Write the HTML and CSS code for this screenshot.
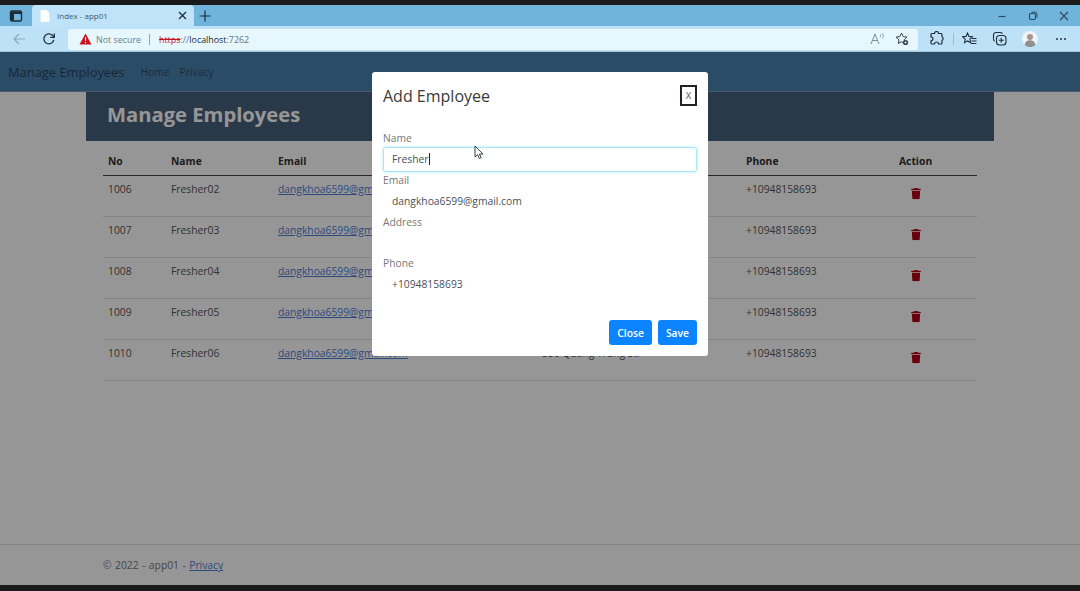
FILE: index.html
```html
<!DOCTYPE html>
<html lang="en">
<head>
<meta charset="UTF-8">
<meta name="viewport" content="width=device-width, initial-scale=1.0">
<title>Index - app01</title>
<link rel="stylesheet" href="styles.css">
</head>
<body>

<div class="tabstrip">
  <div class="tab-actions">
    <svg width="14" height="14" viewBox="0 0 14 14"><rect x="1.5" y="2" width="11" height="10" rx="1.5" fill="none" stroke="#1c2b3a" stroke-width="1.4"/><rect x="2" y="2.5" width="10" height="2.5" fill="#1c2b3a"/><rect x="2" y="5" width="3" height="6.5" fill="#1c2b3a"/></svg>
  </div>
  <div class="tab">
    <svg width="12" height="14" viewBox="0 0 12 14"><path d="M1.5 1h6l3 3v9h-9z" fill="#fff" stroke="#dfeaf2" stroke-width=".6"/></svg>
    <span class="tab-title">Index - app01</span>
    <svg class="tab-close" width="9" height="9" viewBox="0 0 9 9"><path d="M1 1l7 7M8 1L1 8" stroke="#22303c" stroke-width="1.3"/></svg>
  </div>
  <svg class="tab-new" width="12" height="12" viewBox="0 0 12 12"><path d="M6 .5v11M.5 6h11" stroke="#1c2b3a" stroke-width="1.2"/></svg>
  <div class="window-btns">
    <svg width="10" height="10" viewBox="0 0 10 10"><path d="M1.5 5.500h7" stroke="#2c4a60" stroke-width="1.2"/></svg>
    <svg width="10" height="10" viewBox="0 0 10 10"><rect x="1.500" y="2.500" width="6" height="6" rx="1.2" fill="none" stroke="#2c4a60" stroke-width="1.1"/><path d="M3.500 1.200h4a1.400 1.400 0 0 1 1.400 1.400v4" fill="none" stroke="#2c4a60" stroke-width="1"/></svg>
    <svg width="10" height="10" viewBox="0 0 10 10"><path d="M1 1l8 8M9 1L1 9" stroke="#2c4a60" stroke-width="1.1"/></svg>
  </div>
</div>

<div class="toolbar">
  <svg class="nav-back" width="14" height="14" viewBox="0 0 14 14"><path d="M13 7H2M7 2L2 7l5 5" fill="none" stroke="#8fa9bb" stroke-width="1.2"/></svg>
  <svg class="nav-reload" width="14" height="14" viewBox="0 0 14 14"><path d="M11.800 7.800A5 5 0 1 1 10.400 3.300L12 5" fill="none" stroke="#22303c" stroke-width="1.3"/><path d="M12.300 1.400v4h-4" fill="none" stroke="#22303c" stroke-width="1.3"/></svg>
  <div class="addressbar">
    <svg width="13" height="12" viewBox="0 0 13 12"><path d="M6.500.5l6 11H.5z" fill="#c8141c"/><path d="M6.500 4v4M6.500 9v1.200" stroke="#fff" stroke-width="1.1"/></svg>
    <span class="not-secure">Not secure</span>
    <span class="addr-sep"></span>
    <span class="url"><s class="url-https">https</s><span class="url-dim">://</span>localhost<span class="url-dim">:7262</span></span>
    <svg class="addr-read" width="16" height="14" viewBox="0 0 16 14"><path d="M1 12L5 2l4 10M2.500 8.500h5" fill="none" stroke="#7d8d99" stroke-width="1"/><path d="M10 2c1 .8 1 2.400 0 3.200M12 1c1.800 1.400 1.800 4 0 5.400" fill="none" stroke="#7d8d99" stroke-width=".8"/></svg>
    <svg class="addr-fav" width="14" height="14" viewBox="0 0 14 14"><path d="M6.500 1l1.700 3.600 3.800.5-2.800 2.700.7 3.800-3.400-1.900-3.200 1.800.7-3.700L1 5.100l3.800-.5z" fill="none" stroke="#33444f" stroke-width="1"/><circle cx="10.500" cy="10.500" r="2.600" fill="#33444f"/><circle cx="10.500" cy="10.500" r="1" fill="#e6f7fe"/></svg>
  </div>
  <div class="toolbar-icons">
    <svg width="15" height="15" viewBox="0 0 15 15"><path d="M5.500 2.500a2 2 0 0 1 4 0h2.500a1 1 0 0 1 1 1v2.200a2 2 0 0 1 0 3.600V12a1 1 0 0 1-1 1H9.500a2 2 0 0 0-4 0H3a1 1 0 0 1-1-1V9.800a2 2 0 0 0 0-4V3.500a1 1 0 0 1 1-1z" fill="none" stroke="#22303c" stroke-width="1.2"/></svg>
    <span class="tool-sep"></span>
    <svg width="15" height="14" viewBox="0 0 15 14"><path d="M5.500 1l1.500 3.400 3.400.4-2.500 2.400.7 3.500-3.100-1.800-3 1.800.7-3.500L.7 4.800l3.400-.4z" fill="none" stroke="#22303c" stroke-width="1.1"/><path d="M10 6.500h4.500M9.500 9h5M9 11.500h5.500" stroke="#22303c" stroke-width="1"/></svg>
    <svg width="15" height="15" viewBox="0 0 15 15"><path d="M2.500 10.500a4.600 4.600 0 0 1-1-3V4a2.500 2.500 0 0 1 2.500-2.500h4a4 4 0 0 1 2.600 1" fill="none" stroke="#22303c" stroke-width="1.1"/><rect x="4.500" y="4.500" width="9.500" height="9.500" rx="3" fill="none" stroke="#22303c" stroke-width="1.1"/><path d="M9.200 6.800v5M6.800 9.200h5" stroke="#22303c" stroke-width="1.1"/></svg>
    <svg width="16" height="16" viewBox="0 0 16 16"><circle cx="8" cy="8" r="8" fill="#eef3f6"/><circle cx="8" cy="6" r="3" fill="#a8938c"/><path d="M2.600 14c.5-3.400 2.600-4.800 5.400-4.800s4.900 1.400 5.400 4.800A8 8 0 0 1 2.600 14z" fill="#8f8f8f"/></svg>
    <svg class="tool-more" width="12" height="4" viewBox="0 0 12 4"><circle cx="2" cy="2" r="1" fill="#22303c"/><circle cx="6" cy="2" r="1" fill="#22303c"/><circle cx="10" cy="2" r="1" fill="#22303c"/></svg>
  </div>
</div>

<div class="viewport">
  <nav class="navbar">
    <span class="brand">Manage Employees</span>
    <a class="nav-link">Home</a>
    <a class="nav-link">Privacy</a>
  </nav>

  <main class="content">
    <div class="page-title">Manage Employees</div>
    <table class="emp-table">
      <colgroup>
        <col class="col-no"><col class="col-name"><col class="col-email"><col class="col-address"><col class="col-phone"><col class="col-action">
      </colgroup>
      <thead>
        <tr><th>No</th><th>Name</th><th>Email</th><th>Address</th><th>Phone</th><th>Action</th></tr>
      </thead>
      <tbody>
        <tr><td>1006</td><td>Fresher02</td><td><a class="link">dangkhoa6599@gmail.com</a></td><td>556 Quang Trung St.</td><td>+10948158693</td><td><svg class="trash" viewBox="0 0 12 14"><use href="#trash-icon"/></svg></td></tr>
        <tr><td>1007</td><td>Fresher03</td><td><a class="link">dangkhoa6599@gmail.com</a></td><td>556 Quang Trung St.</td><td>+10948158693</td><td><svg class="trash" viewBox="0 0 12 14"><use href="#trash-icon"/></svg></td></tr>
        <tr><td>1008</td><td>Fresher04</td><td><a class="link">dangkhoa6599@gmail.com</a></td><td>556 Quang Trung St.</td><td>+10948158693</td><td><svg class="trash" viewBox="0 0 12 14"><use href="#trash-icon"/></svg></td></tr>
        <tr><td>1009</td><td>Fresher05</td><td><a class="link">dangkhoa6599@gmail.com</a></td><td>556 Quang Trung St.</td><td>+10948158693</td><td><svg class="trash" viewBox="0 0 12 14"><use href="#trash-icon"/></svg></td></tr>
        <tr><td>1010</td><td>Fresher06</td><td><a class="link">dangkhoa6599@gmail.com</a></td><td>556 Quang Trung St.</td><td>+10948158693</td><td><svg class="trash" viewBox="0 0 12 14"><use href="#trash-icon"/></svg></td></tr>
      </tbody>
    </table>
  </main>

  <footer class="footer">&copy; 2022 - app01 - <a class="link">Privacy</a></footer>

  <div class="backdrop">
    <div class="modal">
      <div class="modal-header">
        <h2 class="modal-title">Add Employee</h2>
        <button class="modal-x" type="button">X</button>
      </div>
      <form class="modal-body">
        <label class="field-label">Name</label>
        <div class="field-value field-focus">Fresher<span class="caret"></span></div>
        <label class="field-label">Email</label>
        <div class="field-value">dangkhoa6599@gmail.com</div>
        <label class="field-label">Address</label>
        <div class="field-value"></div>
        <label class="field-label">Phone</label>
        <div class="field-value">+10948158693</div>
      </form>
      <div class="modal-footer">
        <button class="btn" type="button">Close</button>
        <button class="btn" type="button">Save</button>
      </div>
    </div>
    <svg class="mouse" width="10" height="15" viewBox="0 0 10 15"><path d="M1 1v11l2.600-2.300L5.300 13.500l1.800-.8-1.700-3.600H9z" fill="#fff" stroke="#33404a" stroke-width="1"/></svg>
  </div>
</div>

<div class="bottom-bar"></div>

<svg class="icon-defs" width="0" height="0">
  <symbol id="trash-icon" viewBox="0 0 12 14">
    <path d="M4 1.200V.5h4v.7h3.200c.4 0 .6.3.6.7v1H.2v-1c0-.4.2-.7.6-.7z" fill="#b30014"/>
    <path d="M1 3.800h10l-.6 9.200c0 .6-.4 1-1 1H2.600c-.6 0-1-.4-1-1z" fill="#b30014"/>
  </symbol>
</svg>

</body>
</html>
```

FILE: styles.css
```css
* {
  box-sizing: border-box;
}

html, body {
  height: 100%;
}

body {
  margin: 0;
  height: 591px;
  overflow: hidden;
  display: flex;
  flex-direction: column;
  font-family: "Open Sans", "Noto Sans", sans-serif;
  font-size: 10.3px;
  color: #212529;
  background-color: #1a1a1a;
  padding-top: 5px;
}

/* browser chrome */
.tabstrip {
  height: 21px;
  display: flex;
  align-items: center;
  background-color: #70b4dc;
  flex-shrink: 0;
}

.tab-actions {
  width: 32px;
  display: flex;
  justify-content: center;
}

.tab {
  width: 162px;
  height: 21px;
  display: flex;
  align-items: center;
  gap: 6px;
  padding: 0 7px;
  background-color: #bfe3f8;
  border-radius: 4px 4px 0 0;
}

.tab-title {
  flex: 1;
  font-size: 8px;
  color: #44576a;
}

.tab-new {
  margin-left: 5px;
}

.window-btns {
  margin-left: auto;
  display: flex;
  gap: 21px;
  padding-right: 11px;
}

.toolbar {
  height: 26px;
  display: flex;
  align-items: center;
  background-color: #bde1f7;
  border-bottom: 1px solid #a5c8dc;
  flex-shrink: 0;
}

.nav-back {
  margin-left: 12px;
}

.nav-reload {
  margin-left: 16px;
}

.addressbar {
  width: 850px;
  height: 21px;
  flex-shrink: 0;
  margin: 1px 0 0 12px;
  padding: 0 9px 0 11px;
  display: flex;
  align-items: center;
  background-color: #e6f7fe;
  border-radius: 3px;
}

.not-secure {
  margin-left: 4px;
  font-size: 8.9px;
  color: #6f7f8a;
}

.addr-sep {
  width: 1px;
  height: 11px;
  margin: 0 9px 0 8px;
  background-color: #8fa3b0;
}

.url {
  font-size: 8.9px;
  color: #1e2a33;
}

.url-https {
  color: #c8141c;
}

.url-dim {
  color: #66737c;
}

.addr-read {
  margin-left: auto;
}

.addr-fav {
  margin-left: 9px;
}

.toolbar-icons {
  flex: 1;
  display: flex;
  align-items: center;
  padding-left: 11px;
  gap: 15px;
}

.tool-sep {
  width: 1px;
  height: 12px;
  margin: 0 -6.5px;
  background-color: #9dbccd;
}

.tool-more {
  margin-left: 2px;
}

/* page */
.viewport {
  flex: 1;
  position: relative;
  display: flex;
  flex-direction: column;
  background-color: #fff;
  min-height: 0;
}

.navbar {
  height: 40px;
  flex-shrink: 0;
  display: flex;
  align-items: center;
  padding-left: 8px;
  background-color: #4a82b0;
  border-bottom: 1px solid #7b9cba;
}

.brand {
  font-size: 12.9px;
  color: #1b2f3f;
  margin-right: 16px;
  opacity: .75;
}

.nav-link {
  color: #2b4a63;
  margin-right: 10px;
}

.content {
  flex: 1;
  width: 908px;
  margin: 0 auto 0 86px;
}

.page-title {
  height: 49px;
  padding: 0 0 5px 21px;
  display: flex;
  align-items: center;
  font-size: 20.2px;
  font-weight: 700;
  color: #fff;
  background-color: #48617c;
}

.emp-table {
  width: 874px;
  margin: 0 0 0 17px;
  border-collapse: collapse;
  table-layout: fixed;
}

.col-no { width: 63px; }
.col-name { width: 107px; }
.col-email { width: 264px; }
.col-address { width: 204px; }
.col-phone { width: 153px; }
.col-action { width: 83px; }

.emp-table th {
  height: 34px;
  padding: 7px 5px 0;
  text-align: left;
  font-weight: 700;
  color: #333;
  border-bottom: 1px solid #444;
}

.emp-table td {
  height: 41px;
  padding: 6px 5px 5px;
  vertical-align: top;
  color: #555;
  border-bottom: 1px solid #dee2e6;
  white-space: nowrap;
}

.emp-table td .link,
.footer .link {
  color: #4d7fd6;
  text-decoration: underline;
}

.trash {
  display: block;
  width: 10px;
  height: 13px;
  margin: 5px 0 0 12px;
}

.footer {
  height: 41px;
  padding: 13px 0 0 103px;
  color: #777;
  word-spacing: .8px;
  border-top: 1px solid #dee2e6;
}

/* modal */
.backdrop {
  position: absolute;
  inset: 0;
  padding-top: 20px;
  background-color: rgba(0, 0, 0, .41);
}

.modal {
  width: 336px;
  height: 284px;
  margin: 0 auto;
  display: flex;
  flex-direction: column;
  background-color: #fff;
  border-radius: 3px;
}

.modal-header {
  height: 55px;
  padding: 13px 11px 0;
  display: flex;
  justify-content: space-between;
  align-items: flex-start;
}

.modal-title {
  margin: 0;
  font-size: 16px;
  font-weight: 400;
  line-height: 23px;
  color: #3a3a3a;
}

.modal-x {
  width: 17px;
  height: 21px;
  padding: 0;
  font-family: inherit;
  font-size: 9.5px;
  color: #555;
  background-color: #fff;
  border: 2px solid #222;
}

.modal-body {
  flex: 1;
  padding: 3px 11px 0;
}

.field-label {
  display: block;
  height: 17px;
  line-height: 17px;
  color: #777;
}

.field-value {
  height: 24.8px;
  line-height: 23px;
  padding-left: 8px;
  color: #495057;
  border: 1px solid transparent;
  border-radius: 3px;
}

.field-focus {
  border-color: #a6e6f6;
  box-shadow: 0 0 2px 1px #d4f3fb;
}

.caret {
  display: inline-block;
  width: 1px;
  height: 12px;
  vertical-align: -2px;
  background-color: #222;
}

.modal-footer {
  display: flex;
  justify-content: flex-end;
  gap: 6px;
  padding: 0 11px 11px;
}

.btn {
  height: 25px;
  padding: 0 8px;
  font-family: inherit;
  font-size: 10.3px;
  font-weight: 600;
  color: #fff;
  background-color: #0d84ff;
  border: none;
  border-radius: 3px;
}

.mouse {
  position: absolute;
  left: 474px;
  top: 93px;
}

.bottom-bar {
  height: 6px;
  flex-shrink: 0;
  background-color: #1a1a1a;
}

.icon-defs {
  position: absolute;
}
```
